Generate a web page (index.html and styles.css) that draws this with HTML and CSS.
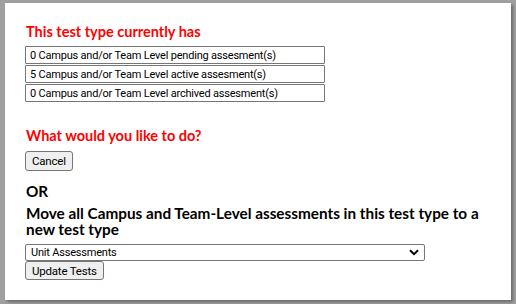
FILE: index.html
```html
<!DOCTYPE html>
<html lang="en">

<head>
    <meta charset="UTF-8">
    <meta name="viewport" content="width=device-width, initial-scale=1.0">
    <title>Delete Test Type</title>
    <link rel="stylesheet" href="styles.css">
</head>

<body>
    <div class="modal">
        <h2 class="warn">This test type currently has</h2>

        <div class="counts">
            <input type="text" class="count" value="0 Campus and/or Team Level pending assesment(s)" readonly>
            <input type="text" class="count" value="5 Campus and/or Team Level active assesment(s)" readonly>
            <input type="text" class="count" value="0 Campus and/or Team Level archived assesment(s)" readonly>
        </div>

        <h2 class="warn ask">What would you like to do?</h2>
        <button type="button" class="btn">Cancel</button>

        <h3 class="or">OR</h3>
        <h3 class="move">Move all Campus and Team-Level assessments in this test type to a new test type</h3>

        <div class="select-wrap">
            <select class="types">
                <option>Unit Assessments</option>
                <option>Benchmark Assessments</option>
                <option>Common Assessments</option>
            </select>
            <svg class="chevron" width="10" height="7" viewBox="0 0 10 7">
                <path d="M1 1.2 L5 5.2 L9 1.2" fill="none" stroke="#000" stroke-width="2"/>
            </svg>
        </div>
        <button type="button" class="btn">Update Tests</button>
    </div>
</body>

</html>
```

FILE: styles.css
```css
html,
body {
    margin: 0;
    height: 100%;
    background-color: #a0a0a0;
}

body {
    padding: 3px 5px 0;
    box-sizing: border-box;
}

.modal {
    background: #fff;
    height: 297px;
    padding: 20px 20px 0;
    box-sizing: border-box;
    box-shadow: 2px 2px 3px rgba(0, 0, 0, 0.35);
    font-family: Lato, 'Noto Sans', sans-serif;
}

.warn {
    color: #ff0000;
    font-size: 14.5px;
    font-weight: 700;
    line-height: 18px;
    margin: 0 0 5px 1px;
}

.ask {
    margin-top: 25px;
    margin-bottom: 6px;
}

.counts {
    display: flex;
    flex-direction: column;
    gap: 1px;
}

.count {
    width: 300px;
    height: 18px;
    box-sizing: border-box;
    border: 1px solid #767676;
    border-radius: 1px;
    padding: 0 4px;
    font-family: Roboto, 'Liberation Sans', sans-serif;
    font-size: 11px;
    letter-spacing: -0.2px;
    color: #000;
    outline: none;
}

.btn {
    display: block;
    height: 20px;
    padding: 0 6px;
    background-color: #efefef;
    border: 1px solid #767676;
    border-radius: 3px;
    font-family: Roboto, 'Liberation Sans', sans-serif;
    font-size: 11.5px;
    letter-spacing: -0.2px;
    color: #000;
}

.or,
.move {
    color: #000;
    font-size: 15.3px;
    font-weight: 700;
    margin: 0 0 0 1px;
}

.or {
    line-height: 17px;
    margin-top: 12px;
    margin-bottom: 5px;
}

.move {
    line-height: 16px;
    margin-bottom: 7px;
}

.select-wrap {
    position: relative;
    width: 400px;
}

.types {
    display: block;
    width: 400px;
    height: 17px;
    box-sizing: border-box;
    border: 1px solid #767676;
    border-radius: 2px;
    padding: 0 20px 0 5px;
    background: #fff;
    font-family: Roboto, 'Liberation Sans', sans-serif;
    font-size: 11px;
    letter-spacing: -0.2px;
    color: #000;
    appearance: none;
    -webkit-appearance: none;
    outline: none;
}

.chevron {
    position: absolute;
    right: 6px;
    top: 5px;
    pointer-events: none;
}

.select-wrap + .btn {
    height: 19px;
}
```
